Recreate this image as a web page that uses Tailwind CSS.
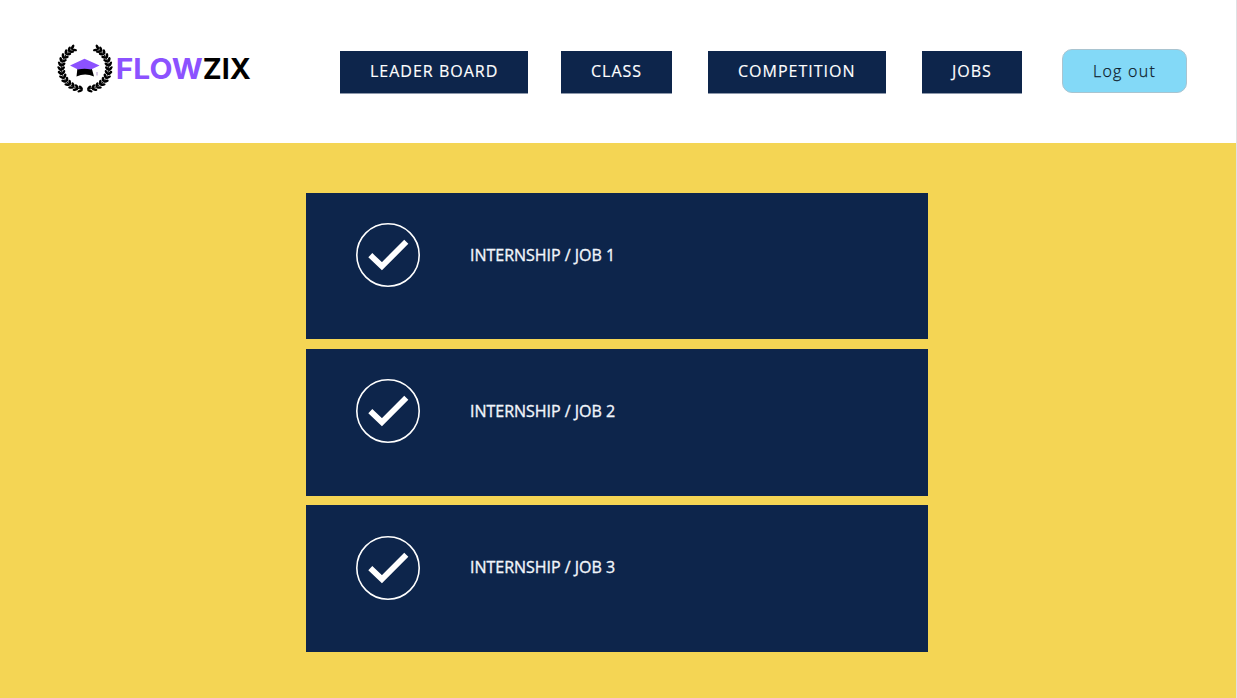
<!DOCTYPE html>
<html lang="en">
<head>
<meta charset="utf-8">
<title>Flowzix</title>
<script src="https://cdn.jsdelivr.net/npm/@tailwindcss/browser@4"></script>
</head>
<body class="h-[698px] overflow-hidden bg-white font-['Open_Sans',sans-serif] text-[16px]">
<svg class="hidden">
  <defs>
    <g id="pair"><ellipse cx="-25.6" cy="0" rx="1.4" ry="2.9" transform="rotate(-34 -25.6 0)"/><ellipse cx="-22" cy="0" rx="1.4" ry="2.7" transform="rotate(38 -22 0)"/></g>
    <g id="branch">
      <use href="#pair" transform="rotate(-79)"/><use href="#pair" transform="rotate(-68)"/><use href="#pair" transform="rotate(-57)"/><use href="#pair" transform="rotate(-46)"/><use href="#pair" transform="rotate(-35)"/><use href="#pair" transform="rotate(-24)"/><use href="#pair" transform="rotate(-13)"/><use href="#pair" transform="rotate(-2)"/><use href="#pair" transform="rotate(9)"/><use href="#pair" transform="rotate(20)"/><use href="#pair" transform="rotate(31)"/><use href="#pair" transform="rotate(42)"/><use href="#pair" transform="rotate(52)"/><use href="#pair" transform="rotate(61)"/>
      <path d="M-2.5 23.6A23.7 23.7 0 0 1 -12 -20.5" fill="none" stroke="#000" stroke-width="1"/>
    </g>
    <g id="check"><circle cx="32" cy="32" r="31.2" fill="none" stroke="#fff" stroke-width="1.6"/><path d="M14.3 32.2L25.9 43.2L50.3 18.8" fill="none" stroke="#fff" stroke-width="5.8"/></g>
  </defs>
</svg>
<div class="flex h-full flex-col border-r border-[#dfe1e4]">
  <header class="flex h-[143px] shrink-0 items-start pl-[56px]">
    <svg class="mt-[40px] h-[56px] w-[200px]" viewBox="56 40 200 56">
      <g transform="translate(85 67.7) scale(1 .92)"><use href="#branch"/><use href="#branch" transform="scale(-1 1)"/></g>
      <path d="M77.5 67.5H91.5L94 76.5Q85 72.5 76.5 76.5Z"/>
      <path d="M70 65.5L84.5 58.7L99.6 65.5L91 69.6Q84.5 67.7 78 69.6Z" fill="#8c52ff"/>
      <path d="M97 72V75.5" stroke="#a58ac4" stroke-width=".9"/>
      <g font-family="Inter, sans-serif" font-weight="700" font-size="28.5"><text x="115.8" y="78.6" fill="#8c52ff" textLength="87" lengthAdjust="spacingAndGlyphs">FLOW</text><text x="202.8" y="78.6" textLength="48" lengthAdjust="spacingAndGlyphs">ZIX</text></g>
    </svg>
    <nav class="mt-[51px] ml-[84px] flex items-start leading-[22px] tracking-[1px] text-white [-webkit-text-stroke:0.15px_white]">
      <a class="h-[42px] w-[188px] bg-[#0d254b] pt-[9px] pl-[30px] whitespace-nowrap shadow-[0_1px_0_#8d98ab]">LEADER BOARD</a>
      <a class="ml-[33px] h-[42px] w-[111px] bg-[#0d254b] pt-[9px] pl-[30px] shadow-[0_1px_0_#8d98ab]">CLASS</a>
      <a class="ml-[36px] h-[42px] w-[178px] bg-[#0d254b] pt-[9px] pl-[30px] shadow-[0_1px_0_#8d98ab]">COMPETITION</a>
      <a class="ml-[36px] h-[42px] w-[100px] bg-[#0d254b] pt-[9px] pl-[30px] shadow-[0_1px_0_#8d98ab]">JOBS</a>
    </nav>
    <a class="mt-[49px] ml-[40px] h-[44px] w-[125px] rounded-[10px] border border-[#a9c4d0] bg-[#83d9f7] pt-[10px] pl-[30px] font-light leading-[22px] tracking-[1.25px] text-[#0d1b2b] [-webkit-text-stroke:0.25px_#0d1b2b]">Log out</a>
  </header>
  <main class="flex flex-1 flex-col bg-[#f4d554] pt-[50px] pl-[306px] leading-[22px] tracking-[-0.02px] text-[#f1f5fb] [-webkit-text-stroke:0.35px_#f1f5fb]">
    <section class="flex h-[146px] w-[622px] bg-[#0d254b] pt-[30px] pl-[50px]"><svg class="h-[64px] w-[64px]"><use href="#check"/></svg><p class="mt-[21px] ml-[50px]">INTERNSHIP / JOB 1</p></section>
    <section class="mt-[10px] flex h-[147px] w-[622px] bg-[#0d254b] pt-[30px] pl-[50px]"><svg class="h-[64px] w-[64px]"><use href="#check"/></svg><p class="mt-[21px] ml-[50px]">INTERNSHIP / JOB 2</p></section>
    <section class="mt-[9px] flex h-[147px] w-[622px] bg-[#0d254b] pt-[31px] pl-[50px]"><svg class="h-[64px] w-[64px]"><use href="#check"/></svg><p class="mt-[20px] ml-[50px]">INTERNSHIP / JOB 3</p></section>
  </main>
</div>
</body>
</html>
